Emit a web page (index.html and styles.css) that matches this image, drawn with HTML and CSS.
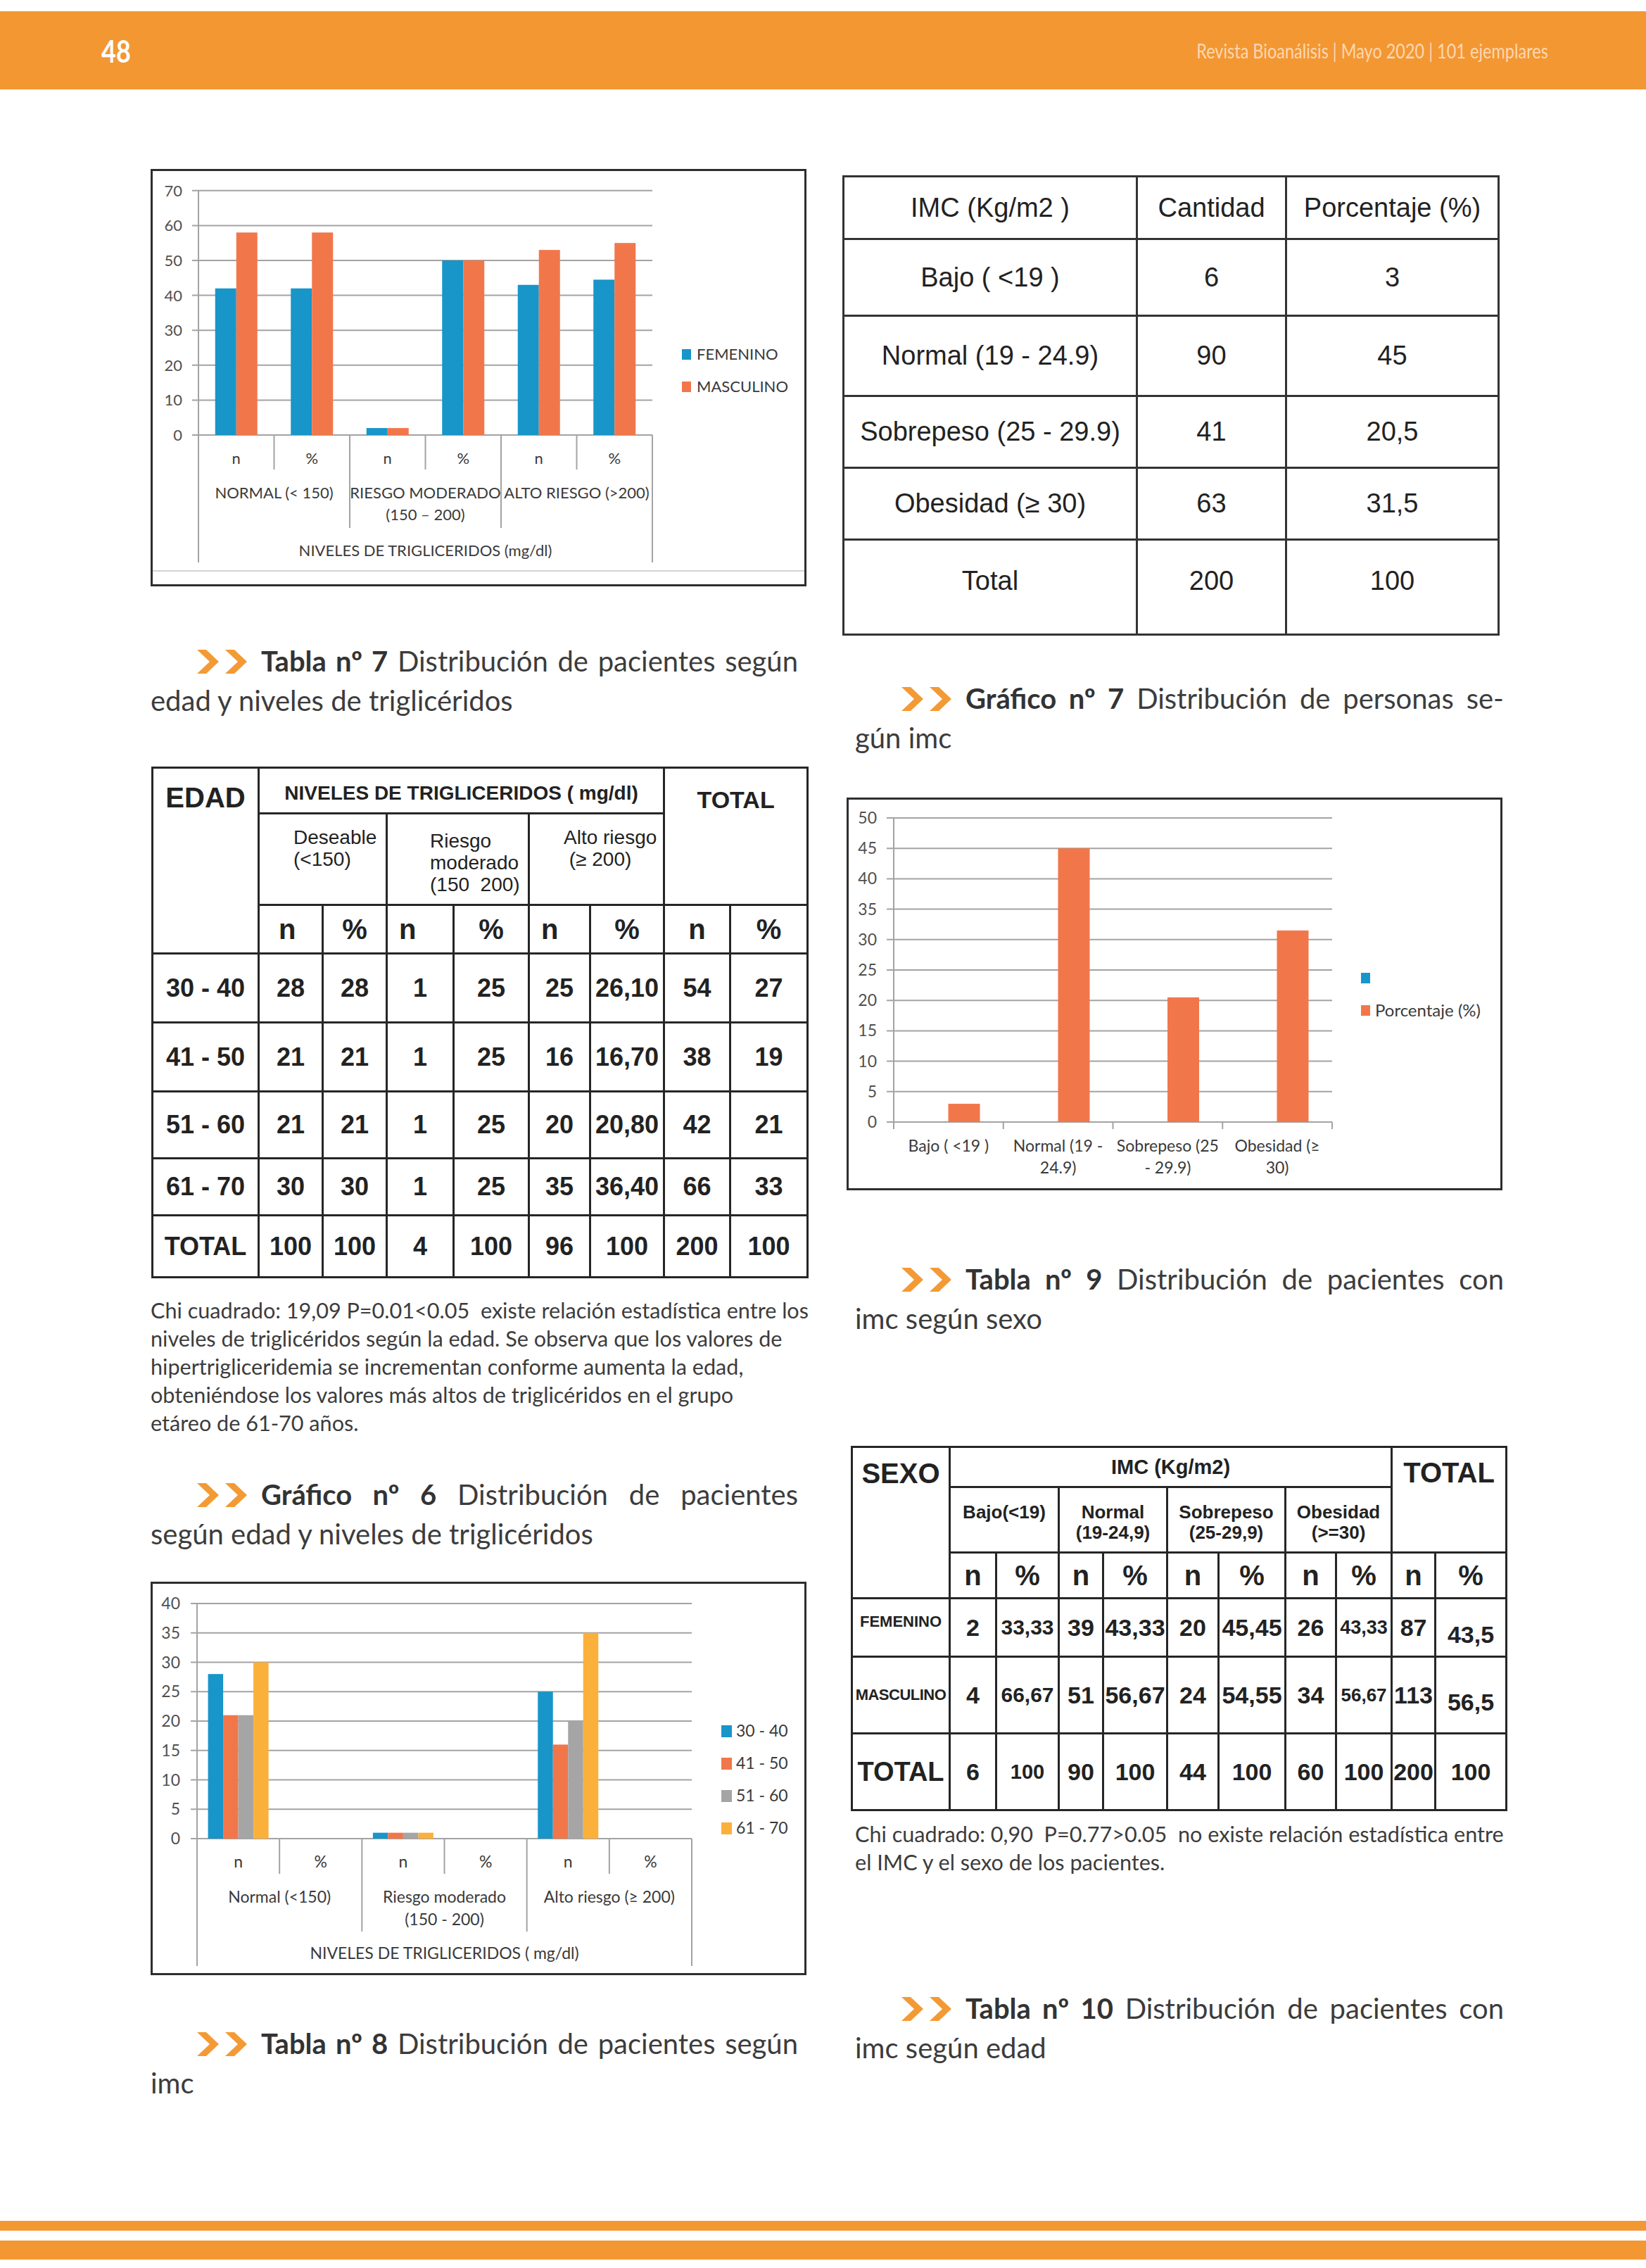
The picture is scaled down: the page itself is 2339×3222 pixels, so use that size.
FILE: index.html
```html
<!DOCTYPE html>
<html lang="es">
<head>
<meta charset="utf-8">
<title>Revista Bioanálisis - 48</title>
<link rel="stylesheet" href="styles.css">
</head>
<body>
<div class="page">
  <header class="topbar">
    <span class="pnum">48</span>
    <span class="pub">Revista Bioanálisis | Mayo 2020 | 101 ejemplares</span>
  </header>

  <main class="cols">
    <section class="col col-left">
      <figure class="chart chart1">
        <svg width="926" height="587" viewBox="0 0 926 587">
          <g class="grid">
            <line x1="56" y1="27.8" x2="710" y2="27.8"/>
            <line x1="56" y1="77.4" x2="710" y2="77.4"/>
            <line x1="56" y1="127" x2="710" y2="127"/>
            <line x1="56" y1="176.6" x2="710" y2="176.6"/>
            <line x1="56" y1="226.2" x2="710" y2="226.2"/>
            <line x1="56" y1="275.8" x2="710" y2="275.8"/>
            <line x1="56" y1="325.4" x2="710" y2="325.4"/>
            <line x1="56" y1="375" x2="710" y2="375"/>
            <line x1="65" y1="27.8" x2="65" y2="556"/>
            <line x1="710" y1="375" x2="710" y2="556"/>
            <line x1="172.5" y1="375" x2="172.5" y2="424"/>
            <line x1="280" y1="375" x2="280" y2="507"/>
            <line x1="387.5" y1="375" x2="387.5" y2="424"/>
            <line x1="495" y1="375" x2="495" y2="507"/>
            <line x1="602.5" y1="375" x2="602.5" y2="424"/>
          </g>
          <g class="bars">
            <rect class="blue" x="88.75" y="166.7" width="30" height="208.3"/>
            <rect class="orange" x="118.75" y="87.3" width="30" height="287.7"/>
            <rect class="blue" x="196.25" y="166.7" width="30" height="208.3"/>
            <rect class="orange" x="226.25" y="87.3" width="30" height="287.7"/>
            <rect class="blue" x="303.75" y="365.1" width="30" height="9.9"/>
            <rect class="orange" x="333.75" y="365.1" width="30" height="9.9"/>
            <rect class="blue" x="411.25" y="127" width="30" height="248"/>
            <rect class="orange" x="441.25" y="127" width="30" height="248"/>
            <rect class="blue" x="518.75" y="161.7" width="30" height="213.3"/>
            <rect class="orange" x="548.75" y="112.1" width="30" height="262.9"/>
            <rect class="blue" x="626.25" y="154.3" width="30" height="220.7"/>
            <rect class="orange" x="656.25" y="102.2" width="30" height="272.8"/>
          </g>
          <g class="ylab">
            <text x="42" y="35.8">70</text>
            <text x="42" y="85.4">60</text>
            <text x="42" y="135">50</text>
            <text x="42" y="184.6">40</text>
            <text x="42" y="234.2">30</text>
            <text x="42" y="283.8">20</text>
            <text x="42" y="333.4">10</text>
            <text x="42" y="383">0</text>
          </g>
          <g class="xlab">
            <text x="118.75" y="416">n</text>
            <text x="226.25" y="416">%</text>
            <text x="333.75" y="416">n</text>
            <text x="441.25" y="416">%</text>
            <text x="548.75" y="416">n</text>
            <text x="656.25" y="416">%</text>
            <text x="172.5" y="465">NORMAL (&lt; 150)</text>
            <text x="387.5" y="465">RIESGO MODERADO</text>
            <text x="387.5" y="496">(150 – 200)</text>
            <text x="602.5" y="465">ALTO RIESGO (&gt;200)</text>
            <text x="387.5" y="547">NIVELES DE TRIGLICERIDOS (mg/dl)</text>
          </g>
          <line class="sep" x1="0" y1="568" x2="926" y2="568"/>
          <g class="legend">
            <rect class="blue" x="752" y="253" width="13" height="15"/>
            <text x="773" y="268">FEMENINO</text>
            <rect class="orange" x="752" y="299" width="13" height="15"/>
            <text x="773" y="314">MASCULINO</text>
          </g>
        </svg>
      </figure>

      <div class="caption cap-t7">
        <div class="l1"><svg class="arrows" width="71" height="34" viewBox="0 0 71 34"><polygon points="0,0 13,0 31,17 13,34 0,34 18,17"/><polygon points="40,0 53,0 71,17 53,34 40,34 58,17"/></svg><b>Tabla nº 7</b> Distribución de pacientes según</div>
        <div class="l2">edad y niveles de triglicéridos</div>
      </div>

      <table class="tbl t7">
        <colgroup>
          <col class="w151"><col class="w91"><col class="w91"><col class="w95"><col class="w107"><col class="w87"><col class="w105"><col class="w94"><col class="w110">
        </colgroup>
        <tr class="r65">
          <th rowspan="3" class="edad">EDAD</th>
          <th colspan="6" class="niv">NIVELES DE TRIGLICERIDOS ( mg/dl)</th>
          <th colspan="2" rowspan="2" class="tot7">TOTAL</th>
        </tr>
        <tr class="r130">
          <th colspan="2" class="sub des">Deseable<br>(&lt;150)</th>
          <th colspan="2" class="sub rie">Riesgo<br>moderado<br>(150&nbsp; 200)</th>
          <th colspan="2" class="sub alto">Alto riesgo<br>&nbsp;(≥ 200)</th>
        </tr>
        <tr class="r69 np">
          <th class="nl1">n</th><th>%</th><th class="nl">n</th><th>%</th><th class="nl">n</th><th>%</th><th>n</th><th>%</th>
        </tr>
        <tr class="r98">
          <td class="lab">30 - 40</td><td>28</td><td>28</td><td>1</td><td>25</td><td>25</td><td>26,10</td><td>54</td><td>27</td>
        </tr>
        <tr class="r98">
          <td class="lab">41 - 50</td><td>21</td><td>21</td><td>1</td><td>25</td><td>16</td><td>16,70</td><td>38</td><td>19</td>
        </tr>
        <tr class="r95">
          <td class="lab">51 - 60</td><td>21</td><td>21</td><td>1</td><td>25</td><td>20</td><td>20,80</td><td>42</td><td>21</td>
        </tr>
        <tr class="r81">
          <td class="lab">61 - 70</td><td>30</td><td>30</td><td>1</td><td>25</td><td>35</td><td>36,40</td><td>66</td><td>33</td>
        </tr>
        <tr class="r88">
          <td class="lab">TOTAL</td><td>100</td><td>100</td><td>4</td><td>100</td><td>96</td><td>100</td><td>200</td><td>100</td>
        </tr>
      </table>

      <p class="note note-left">Chi cuadrado: 19,09 P=0.01&lt;0.05&nbsp; existe relación estadística entre los<br>niveles de triglicéridos según la edad. Se observa que los valores de<br>hipertrigliceridemia se incrementan conforme aumenta la edad,<br>obteniéndose los valores más altos de triglicéridos en el grupo<br>etáreo de 61-70 años.</p>

      <div class="caption cap-g6">
        <div class="l1"><svg class="arrows" width="71" height="34" viewBox="0 0 71 34"><polygon points="0,0 13,0 31,17 13,34 0,34 18,17"/><polygon points="40,0 53,0 71,17 53,34 40,34 58,17"/></svg><b>Gráfico nº 6</b> Distribución de pacientes</div>
        <div class="l2">según edad y niveles de triglicéridos</div>
      </div>

      <figure class="chart chart2">
        <svg width="926" height="553" viewBox="0 0 926 553">
          <g class="grid">
            <line x1="54" y1="28" x2="766" y2="28"/>
            <line x1="54" y1="69.75" x2="766" y2="69.75"/>
            <line x1="54" y1="111.5" x2="766" y2="111.5"/>
            <line x1="54" y1="153.25" x2="766" y2="153.25"/>
            <line x1="54" y1="195" x2="766" y2="195"/>
            <line x1="54" y1="236.75" x2="766" y2="236.75"/>
            <line x1="54" y1="278.5" x2="766" y2="278.5"/>
            <line x1="54" y1="320.25" x2="766" y2="320.25"/>
            <line x1="54" y1="362" x2="766" y2="362"/>
            <line x1="63" y1="28" x2="63" y2="543"/>
            <line x1="766" y1="362" x2="766" y2="543"/>
            <line x1="180.17" y1="362" x2="180.17" y2="412"/>
            <line x1="297.33" y1="362" x2="297.33" y2="494"/>
            <line x1="414.5" y1="362" x2="414.5" y2="412"/>
            <line x1="531.67" y1="362" x2="531.67" y2="494"/>
            <line x1="648.83" y1="362" x2="648.83" y2="412"/>
          </g>
          <g class="bars">
            <rect class="blue" x="78.6" y="128.2" width="21.5" height="233.8"/>
            <rect class="orange" x="100.1" y="186.65" width="21.5" height="175.35"/>
            <rect class="gray" x="121.6" y="186.65" width="21.5" height="175.35"/>
            <rect class="gold" x="143.1" y="111.5" width="21.5" height="250.5"/>
            <rect class="blue" x="312.9" y="353.65" width="21.5" height="8.35"/>
            <rect class="orange" x="334.4" y="353.65" width="21.5" height="8.35"/>
            <rect class="gray" x="355.9" y="353.65" width="21.5" height="8.35"/>
            <rect class="gold" x="377.4" y="353.65" width="21.5" height="8.35"/>
            <rect class="blue" x="547.25" y="153.25" width="21.5" height="208.75"/>
            <rect class="orange" x="568.75" y="228.4" width="21.5" height="133.6"/>
            <rect class="gray" x="590.25" y="195" width="21.5" height="167"/>
            <rect class="gold" x="611.75" y="69.75" width="21.5" height="292.25"/>
          </g>
          <g class="ylab">
            <text x="39" y="36">40</text>
            <text x="39" y="77.75">35</text>
            <text x="39" y="119.5">30</text>
            <text x="39" y="161.25">25</text>
            <text x="39" y="203">20</text>
            <text x="39" y="244.75">15</text>
            <text x="39" y="286.5">10</text>
            <text x="39" y="328.25">5</text>
            <text x="39" y="370">0</text>
          </g>
          <g class="xlab">
            <text x="121.6" y="403">n</text>
            <text x="238.75" y="403">%</text>
            <text x="355.9" y="403">n</text>
            <text x="473.1" y="403">%</text>
            <text x="590.25" y="403">n</text>
            <text x="707.4" y="403">%</text>
            <text x="180.17" y="453">Normal (&lt;150)</text>
            <text x="414.5" y="453">Riesgo moderado</text>
            <text x="414.5" y="485">(150 - 200)</text>
            <text x="648.83" y="453">Alto riesgo (≥ 200)</text>
            <text x="414.5" y="533">NIVELES DE TRIGLICERIDOS ( mg/dl)</text>
          </g>
          <g class="legend">
            <rect class="blue" x="808" y="201" width="15" height="17"/>
            <text x="829" y="217">30 - 40</text>
            <rect class="orange" x="808" y="247" width="15" height="17"/>
            <text x="829" y="263">41 - 50</text>
            <rect class="gray" x="808" y="293" width="15" height="17"/>
            <text x="829" y="309">51 - 60</text>
            <rect class="gold" x="808" y="339" width="15" height="17"/>
            <text x="829" y="355">61 - 70</text>
          </g>
        </svg>
      </figure>

      <div class="caption cap-t8">
        <div class="l1"><svg class="arrows" width="71" height="34" viewBox="0 0 71 34"><polygon points="0,0 13,0 31,17 13,34 0,34 18,17"/><polygon points="40,0 53,0 71,17 53,34 40,34 58,17"/></svg><b>Tabla nº 8</b> Distribución de pacientes según</div>
        <div class="l2">imc</div>
      </div>
    </section>

    <section class="col col-right">
      <table class="tbl timc">
        <colgroup><col class="w417"><col class="w212"><col class="w302"></colgroup>
        <tr class="r89"><td>IMC (Kg/m2 )</td><td>Cantidad</td><td>Porcentaje (%)</td></tr>
        <tr class="r109"><td>Bajo ( &lt;19 )</td><td>6</td><td>3</td></tr>
        <tr class="r114"><td>Normal (19 - 24.9)</td><td>90</td><td>45</td></tr>
        <tr class="r102"><td>Sobrepeso (25 - 29.9)</td><td>41</td><td>20,5</td></tr>
        <tr class="r102"><td>Obesidad (≥ 30)</td><td>63</td><td>31,5</td></tr>
        <tr class="r135 last"><td>Total</td><td>200</td><td>100</td></tr>
      </table>

      <div class="caption rcap cap-g7">
        <div class="l1"><svg class="arrows" width="71" height="34" viewBox="0 0 71 34"><polygon points="0,0 13,0 31,17 13,34 0,34 18,17"/><polygon points="40,0 53,0 71,17 53,34 40,34 58,17"/></svg><b>Gráfico nº 7</b> Distribución de personas se-</div>
        <div class="l2">gún imc</div>
      </div>

      <figure class="chart chart3">
        <svg width="926" height="552" viewBox="0 0 926 552">
          <g class="grid">
            <line x1="54" y1="26" x2="687" y2="26"/>
            <line x1="54" y1="69.2" x2="687" y2="69.2"/>
            <line x1="54" y1="112.4" x2="687" y2="112.4"/>
            <line x1="54" y1="155.6" x2="687" y2="155.6"/>
            <line x1="54" y1="198.8" x2="687" y2="198.8"/>
            <line x1="54" y1="242" x2="687" y2="242"/>
            <line x1="54" y1="285.2" x2="687" y2="285.2"/>
            <line x1="54" y1="328.4" x2="687" y2="328.4"/>
            <line x1="54" y1="371.6" x2="687" y2="371.6"/>
            <line x1="54" y1="414.8" x2="687" y2="414.8"/>
            <line x1="54" y1="458" x2="687" y2="458"/>
            <line x1="64" y1="26" x2="64" y2="468"/>
            <line x1="219.75" y1="458" x2="219.75" y2="468"/>
            <line x1="375.5" y1="458" x2="375.5" y2="468"/>
            <line x1="531.25" y1="458" x2="531.25" y2="468"/>
            <line x1="687" y1="458" x2="687" y2="468"/>
          </g>
          <g class="bars">
            <rect class="orange" x="141.5" y="432.08" width="45" height="25.92"/>
            <rect class="orange" x="297.5" y="69.2" width="45" height="388.8"/>
            <rect class="orange" x="453" y="280.88" width="45" height="177.12"/>
            <rect class="orange" x="608.5" y="185.84" width="45" height="272.16"/>
          </g>
          <g class="ylab">
            <text x="40" y="34">50</text>
            <text x="40" y="77.2">45</text>
            <text x="40" y="120.4">40</text>
            <text x="40" y="163.6">35</text>
            <text x="40" y="206.8">30</text>
            <text x="40" y="250">25</text>
            <text x="40" y="293.2">20</text>
            <text x="40" y="336.4">15</text>
            <text x="40" y="379.6">10</text>
            <text x="40" y="422.8">5</text>
            <text x="40" y="466">0</text>
          </g>
          <g class="xlab">
            <text x="141.9" y="500">Bajo ( &lt;19 )</text>
            <text x="297.6" y="500">Normal (19 -</text>
            <text x="297.6" y="531">24.9)</text>
            <text x="453.4" y="500">Sobrepeso (25</text>
            <text x="453.4" y="531">- 29.9)</text>
            <text x="609.1" y="500">Obesidad (≥</text>
            <text x="609.1" y="531">30)</text>
          </g>
          <g class="legend">
            <rect class="blue" x="728" y="246" width="13" height="15"/>
            <rect class="orange" x="728" y="292" width="13" height="15"/>
            <text x="748" y="308">Porcentaje (%)</text>
          </g>
        </svg>
      </figure>

      <div class="caption rcap cap-t9">
        <div class="l1"><svg class="arrows" width="71" height="34" viewBox="0 0 71 34"><polygon points="0,0 13,0 31,17 13,34 0,34 18,17"/><polygon points="40,0 53,0 71,17 53,34 40,34 58,17"/></svg><b>Tabla nº 9</b> Distribución de pacientes con</div>
        <div class="l2">imc según sexo</div>
      </div>

      <table class="tbl t9">
        <colgroup>
          <col class="w139"><col class="w66"><col class="w89"><col class="w63"><col class="w91"><col class="w73"><col class="w95"><col class="w72"><col class="w79"><col class="w62"><col class="w101">
        </colgroup>
        <tr class="r57">
          <th rowspan="3" class="sexo">SEXO</th>
          <th colspan="8" class="imc">IMC (Kg/m2)</th>
          <th colspan="2" rowspan="2" class="tot9">TOTAL</th>
        </tr>
        <tr class="r93">
          <th colspan="2" class="sub9">Bajo(&lt;19)</th>
          <th colspan="2" class="sub9">Normal<br>(19-24,9)</th>
          <th colspan="2" class="sub9">Sobrepeso<br>(25-29,9)</th>
          <th colspan="2" class="sub9">Obesidad<br>(&gt;=30)</th>
        </tr>
        <tr class="r65 np">
          <th>n</th><th>%</th><th>n</th><th>%</th><th>n</th><th>%</th><th>n</th><th>%</th><th>n</th><th>%</th>
        </tr>
        <tr class="r83">
          <td class="sx">FEMENINO</td><td>2</td><td class="s30">33,33</td><td>39</td><td>43,33</td><td>20</td><td>45,45</td><td>26</td><td class="s27">43,33</td><td>87</td><td class="low">43,5</td>
        </tr>
        <tr class="r109">
          <td class="sx mas">MASCULINO</td><td>4</td><td class="s30">66,67</td><td>51</td><td>56,67</td><td>24</td><td>54,55</td><td>34</td><td class="s26">56,67</td><td>113</td><td class="low">56,5</td>
        </tr>
        <tr class="r109">
          <td class="lab9">TOTAL</td><td>6</td><td class="s29">100</td><td>90</td><td>100</td><td>44</td><td>100</td><td>60</td><td>100</td><td>200</td><td>100</td>
        </tr>
      </table>

      <p class="note note-right">Chi cuadrado: 0,90&nbsp; P=0.77&gt;0.05&nbsp; no existe relación estadística entre<br>el IMC y el sexo de los pacientes.</p>

      <div class="caption rcap cap-t10">
        <div class="l1"><svg class="arrows" width="71" height="34" viewBox="0 0 71 34"><polygon points="0,0 13,0 31,17 13,34 0,34 18,17"/><polygon points="40,0 53,0 71,17 53,34 40,34 58,17"/></svg><b>Tabla nº 10</b> Distribución de pacientes con</div>
        <div class="l2">imc según edad</div>
      </div>
    </section>
  </main>

  <footer class="footbar">
    <div class="stripe s1"></div>
    <div class="stripe s2"></div>
  </footer>
</div>
</body>
</html>
```

FILE: styles.css
```css
* { box-sizing: border-box; }
html, body { margin: 0; padding: 0; background: #fff; }
body { font-family: Lato, "Open Sans", sans-serif; color: #333; }

.page {
  width: 2339px;
  height: 3222px;
  display: flex;
  flex-direction: column;
  overflow: hidden;
}

/* header band */
.topbar {
  margin-top: 16px;
  height: 111px;
  flex: none;
  background: #f39733;
  display: flex;
  align-items: center;
  justify-content: space-between;
  padding: 0 139px 0 144px;
}
.pnum {
  color: #fff;
  font-weight: 700;
  font-size: 44px;
  display: inline-block;
  transform: scaleX(0.82);
  transform-origin: left center;
}
.pub {
  color: #fcd8b2;
  font-size: 29px;
  display: inline-block;
  transform: scaleX(0.81);
  transform-origin: right center;
}

/* two columns */
.cols {
  flex: 1;
  display: grid;
  grid-template-columns: 932px 942px;
  column-gap: 51px;
  padding-left: 214px;
}
.col { display: flex; flex-direction: column; align-items: flex-start; }
.col-left { padding-top: 113px; }
.col-right { padding-top: 122px; }

/* footer stripes */
.footbar { flex: none; display: flex; flex-direction: column; gap: 14px; margin-bottom: 12px; }
.stripe { background: #f39733; }
.s1 { height: 14px; }
.s2 { height: 27px; }

/* captions */
.caption { font-size: 40px; line-height: 56px; color: #3c3c3c; width: 920px; }
.caption b { font-weight: 700; color: #333; }
.caption .l1 { padding-left: 66px; text-align: justify; text-align-last: justify; }
.arrows { vertical-align: -3px; margin-right: 20px; }
.arrows polygon { fill: #f39a35; }
.rcap { margin-left: 18px; width: 922px; }

.cap-t7 { margin-top: 78px; }
.cap-g6 { margin-top: 53px; }
.cap-t8 { margin-top: 69px; }
.cap-g7 { margin-top: 61px; }
.cap-t9 { margin-top: 98px; }
.cap-t10 { margin-top: 159px; }

/* notes */
.note { margin: 0; font-size: 30.6px; line-height: 40px; color: #3c3c3c; white-space: nowrap; }
.note-left { margin-top: 26px; }
.note-right { margin-top: 13px; margin-left: 18px; }

/* charts */
.chart { margin: 0; border: 3px solid #2e2e2e; background: #fff; width: 932px; }
.chart svg { display: block; }
.chart1 { height: 593px; }
.chart2 { height: 559px; margin-top: 40px; }
.chart3 { height: 558px; margin-top: 57px; margin-left: 6px; }
.grid line { stroke: #a3a3a3; stroke-width: 2; }
.sep { stroke: #c4c4c4; stroke-width: 1.5; }
.blue { fill: #1895c9; }
.orange { fill: #f1774b; }
.gray { fill: #a5a5a5; }
.gold { fill: #fbb03b; }
.chart text { font-family: Lato, "Open Sans", sans-serif; font-size: 22px; fill: #3a3a3a; }
.chart2 text, .chart3 text { font-size: 23px; }
.ylab text { text-anchor: end; fill: #505050; }
.xlab text { text-anchor: middle; }
.chart1 .legend text { font-size: 22px; }
.chart3 .legend text { font-size: 24px; }

/* tables */
.tbl {
  border-collapse: collapse;
  table-layout: fixed;
  font-family: "Liberation Sans", Arial, sans-serif;
  color: #222;
}
.tbl td, .tbl th {
  border: 3px solid #262626;
  padding: 0;
  text-align: center;
  vertical-align: middle;
  white-space: nowrap;
}

/* table 7 */
.t7 { margin-top: 66px; margin-left: 1px; width: 931px; }
.w151 { width: 151px; } .w91 { width: 91px; } .w95 { width: 95px; } .w107 { width: 107px; }
.w87 { width: 87px; } .w105 { width: 105px; } .w94 { width: 94px; } .w110 { width: 110px; }
.r65 { height: 65px; } .r130 { height: 130px; } .r69 { height: 69px; } .r98 { height: 98px; }
.r95 { height: 95px; } .r81 { height: 81px; } .r88 { height: 88px; }
.t7 td { font-size: 36px; font-weight: 700; }
.t7 .edad { font-size: 40px; line-height: 40px; vertical-align: top; padding-top: 21px; }
.t7 .niv { font-size: 28px; padding-top: 8px; }
.t7 .tot7 { font-size: 34px; line-height: 34px; vertical-align: top; padding-top: 27px; }
.t7 .sub { font-size: 28px; font-weight: 400; line-height: 31px; text-align: left; vertical-align: top; }
.t7 .des { padding: 17px 0 0 48px; }
.t7 .rie { padding: 22px 0 0 60px; }
.t7 .alto { padding: 17px 0 0 48px; }
.np th { font-size: 40px; font-weight: 700; }
.t7 .nl { text-align: left; padding-left: 16px; }
.t7 .nl1 { text-align: left; padding-left: 27px; }
.t7 .lab { font-size: 36px; }

/* IMC table */
.timc { width: 931px; font-size: 38px; }
.timc td { font-weight: 400; border-color: #333; }
.w417 { width: 417px; } .w212 { width: 212px; } .w302 { width: 302px; }
.r89 { height: 89px; } .r109 { height: 109px; } .r114 { height: 114px; } .r102 { height: 102px; } .r135 { height: 135px; }
.timc .last td { padding-bottom: 18px; }

/* table 9 */
.t9 { margin-top: 153px; margin-left: 12px; width: 930px; }
.w139 { width: 139px; } .w66 { width: 66px; } .w89 { width: 89px; } .w63 { width: 63px; }
.w73 { width: 73px; } .w72 { width: 72px; } .w79 { width: 79px; } .w62 { width: 62px; } .w101 { width: 101px; }
.r57 { height: 57px; } .r93 { height: 93px; } .r83 { height: 83px; }
.t9 td { font-size: 34px; font-weight: 700; }
.t9 .sexo { font-size: 40px; line-height: 40px; vertical-align: top; padding-top: 16px; }
.t9 .imc { font-size: 29px; }
.t9 .tot9 { font-size: 40px; line-height: 40px; vertical-align: top; padding-top: 15px; }
.t9 .sub9 { font-size: 26px; line-height: 29px; vertical-align: top; padding-top: 20px; }
.t9 .sx { font-size: 22px; padding-bottom: 16px; }
.t9 .mas { letter-spacing: -0.5px; padding-bottom: 0; }
.t9 .lab9 { font-size: 38px; }
.t9 .s30 { font-size: 30px; }
.t9 .s29 { font-size: 29px; }
.t9 .s27 { font-size: 27px; }
.t9 .s26 { font-size: 26px; }
.t9 .low { padding-top: 20px; }
```
